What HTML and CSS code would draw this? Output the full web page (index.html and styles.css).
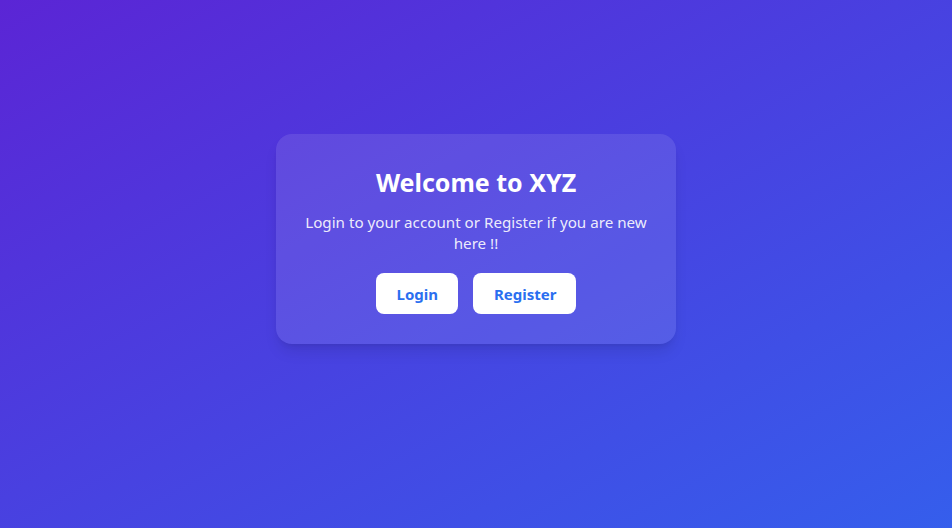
FILE: index.html
```html
<!DOCTYPE html>
<html lang="en">
<head>
<meta charset="utf-8">
<title>Welcome to XYZ</title>
<link rel="stylesheet" href="styles.css">
</head>
<body>
<main class="page">
  <section class="card">
    <h1 class="title">Welcome to XYZ</h1>
    <p class="text">Login to your account or Register if you are new here !!</p>
    <div class="actions">
      <button class="btn">Login</button>
      <button class="btn">Register</button>
    </div>
  </section>
</main>
</body>
</html>
```

FILE: styles.css
```css
* { box-sizing: border-box; }
html, body { margin: 0; padding: 0; height: 100%; }
body {
  font-family: "Noto Sans", "Open Sans", sans-serif;
  background: linear-gradient(to bottom right, #5b25d5, #355eec);
  color: #fff;
}
.page {
  height: 528px;
  display: flex;
  align-items: flex-start;
  justify-content: center;
  padding-top: 134px;
}
.card {
  width: 400px;
  padding: 32px 24px 30px;
  border-radius: 16px;
  background: rgba(255, 255, 255, 0.1);
  box-shadow: 0 10px 15px -3px rgba(0,0,0,0.1), 0 4px 6px -4px rgba(0,0,0,0.1);
  text-align: center;
}
.title {
  margin: 0 0 14px;
  font-size: 25px;
  line-height: 32px;
  font-weight: 700;
}
.text {
  margin: 0 0 19px;
  font-size: 15.2px;
  line-height: 21px;
  color: rgba(255,255,255,0.9);
}
.actions {
  display: flex;
  justify-content: center;
  gap: 15px;
}
.btn {
  font-family: inherit;
  font-size: 15px;
  font-weight: 700;
  line-height: 24px;
  padding: 8px 20px 8px 21px;
  height: 41px;
  border: 0;
  border-radius: 8px;
  background: #fff;
  color: #2a6ff0;
}
```
